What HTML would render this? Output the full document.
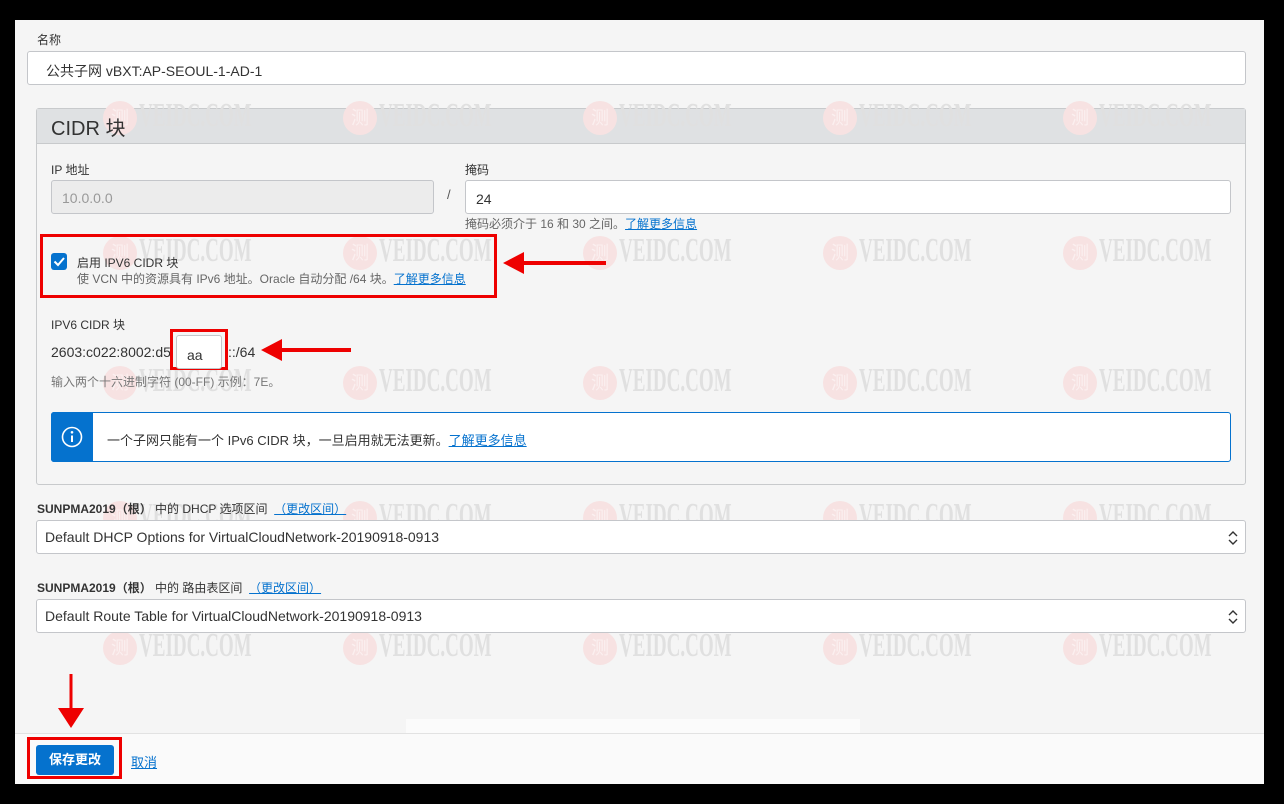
<!DOCTYPE html>
<html><head><meta charset="utf-8"><style>
*{box-sizing:border-box;margin:0;padding:0}
body{width:1284px;height:804px;background:#000;position:relative;overflow:hidden;font-family:"Liberation Sans","Noto Sans CJK SC",sans-serif;color:#333}
.a{position:absolute}
#pg{left:15px;top:20px;width:1249px;height:764px;background:#f5f5f5}
.lbl{font-size:12px;color:#333}
.inp{background:#fff;border:1px solid #c4c6ca;border-radius:3px}
.wm{position:absolute;width:140px;height:34px}
.wm .c{position:absolute;left:0;top:0;width:34px;height:34px;border-radius:50%;background:#f7e2e2;color:#fbf0f0;font-size:18px;text-align:center;line-height:34px}
.wm .t{position:absolute;left:36px;top:-4px;font-family:"Liberation Serif",serif;font-weight:bold;font-size:34px;color:#e0e0e0;transform:scaleX(.56);transform-origin:left}
.lk{color:#0572ce;text-decoration:underline}
.red{position:absolute;border:3px solid #e00}
.sel{font-size:14px;padding-left:8px;line-height:32px;color:#333}
</style></head><body>
<div id="pg" class="a"></div>
<div class="a" style="left:36px;top:108px;width:1210px;height:377px;border:1px solid #c8cacc;border-radius:3px;background:#f5f5f5"></div>
<div class="a" style="left:37px;top:109px;width:1208px;height:35px;background:#dfe1e3;border-bottom:1px solid #c8cacc"></div>
<div class="a" style="left:15px;top:733px;width:1249px;height:51px;background:#fafafa;border-top:1px solid #e2e2e2"></div>
<div class="a" style="left:406px;top:719px;width:454px;height:14px;background:#fbfbfb"></div>
<div id="wms"></div>
<div class="a lbl" style="left:37px;top:31px">名称</div>
<div class="a inp" style="left:27px;top:51px;width:1219px;height:34px;font-size:14px;padding:9px 0 0 18px;color:#333">公共子网 vBXT:AP-SEOUL-1-AD-1</div>

<div class="a" style="left:51px;top:112px;font-size:20px;color:#333">CIDR 块</div>

<div class="a lbl" style="left:51px;top:161px">IP 地址</div>
<div class="a" style="left:51px;top:180px;width:383px;height:34px;background:#ececec;border:1px solid #c4c6ca;border-radius:3px;font-size:14px;color:#999;padding:9px 0 0 10px">10.0.0.0</div>
<div class="a" style="left:447px;top:187px;font-size:13px;color:#555">/</div>
<div class="a lbl" style="left:465px;top:161px">掩码</div>
<div class="a inp" style="left:465px;top:180px;width:766px;height:34px;font-size:14px;padding:10px 0 0 10px">24</div>
<div class="a" style="left:465px;top:215px;font-size:12px;color:#666">掩码必须介于 16 和 30 之间。<span class="lk">了解更多信息</span></div>

<div class="red" style="left:40px;top:234px;width:457px;height:64px"></div>
<div class="a" style="left:51px;top:253px;width:16px;height:17px;background:#0572ce;border-radius:3px"></div>
<svg class="a" style="left:51px;top:253px" width="16" height="17"><path d="M3.5 8.5 L7 12 L13 5" stroke="#fff" stroke-width="2" fill="none"/></svg>
<div class="a" style="left:77px;top:254px;font-size:12px;color:#333">启用 IPV6 CIDR 块</div>
<div class="a" style="left:77px;top:270px;font-size:12px;color:#666">使 VCN 中的资源具有 IPv6 地址。Oracle 自动分配 /64 块。<span class="lk">了解更多信息</span></div>
<svg class="a" style="left:500px;top:250px" width="110" height="26"><path d="M106 13 H20" stroke="#e00" stroke-width="4"/><path d="M3 13 L24 2 L24 24 Z" fill="#e00"/></svg>

<div class="a lbl" style="left:51px;top:316px">IPV6 CIDR 块</div>
<div class="a" style="left:51px;top:344px;font-size:14px;color:#333">2603:c022:8002:d5</div>
<div class="red" style="left:170px;top:329px;width:58px;height:41px"></div>
<div class="a inp" style="left:176px;top:335px;width:46px;height:34px;font-size:14px;padding:11px 0 0 10px">aa</div>
<div class="a" style="left:228px;top:344px;font-size:14px;color:#333">::/64</div>
<svg class="a" style="left:258px;top:337px" width="96" height="26"><path d="M93 13 H20" stroke="#e00" stroke-width="4"/><path d="M3 13 L24 2 L24 24 Z" fill="#e00"/></svg>
<div class="a" style="left:51px;top:373px;font-size:12px;color:#777">输入两个十六进制字符 (00-FF) 示例：7E。</div>

<div class="a" style="left:51px;top:412px;width:1180px;height:50px;background:#fff;border:1px solid #0572ce;border-radius:3px"></div>
<div class="a" style="left:51px;top:412px;width:42px;height:50px;background:#0572ce;border-radius:3px 0 0 3px"></div>
<svg class="a" style="left:60px;top:425px" width="24" height="24"><circle cx="12" cy="12" r="9.5" stroke="#fff" stroke-width="1.6" fill="none"/><circle cx="12" cy="7.3" r="1.3" fill="#fff"/><path d="M12 10.5 V17" stroke="#fff" stroke-width="2"/></svg>
<div class="a" style="left:107px;top:430px;font-size:13px;color:#333">一个子网只能有一个 IPv6 CIDR 块，一旦启用就无法更新。<span class="lk">了解更多信息</span></div>

<div class="a" style="left:37px;top:500px;font-size:12px;color:#333"><b>SUNPMA2019（根）</b> 中的 DHCP 选项区间 &nbsp;<span class="lk">（更改区间）</span></div>
<div class="a inp sel" style="left:36px;top:520px;width:1210px;height:34px">Default DHCP Options for VirtualCloudNetwork-20190918-0913</div>
<svg class="a" style="left:1227px;top:530px" width="12" height="16"><path d="M2 6 L6 2 L10 6 M2 10 L6 14 L10 10" stroke="#333" stroke-width="1.4" fill="none"/></svg>
<div class="a" style="left:37px;top:579px;font-size:12px;color:#333"><b>SUNPMA2019（根）</b> 中的 路由表区间 &nbsp;<span class="lk">（更改区间）</span></div>
<div class="a inp sel" style="left:36px;top:599px;width:1210px;height:34px">Default Route Table for VirtualCloudNetwork-20190918-0913</div>
<svg class="a" style="left:1227px;top:609px" width="12" height="16"><path d="M2 6 L6 2 L10 6 M2 10 L6 14 L10 10" stroke="#333" stroke-width="1.4" fill="none"/></svg>

<svg class="a" style="left:54px;top:672px" width="34" height="58"><path d="M17 2 V38" stroke="#e00" stroke-width="3"/><path d="M4 36 L30 36 L17 56 Z" fill="#e00"/></svg>
<div class="red" style="left:27px;top:737px;width:95px;height:42px"></div>
<div class="a" style="left:36px;top:745px;width:78px;height:30px;background:#0572ce;border-radius:3px;color:#fff;font-size:13px;font-weight:bold;text-align:center;line-height:30px">保存更改</div>
<div class="a lk" style="left:131px;top:752px;font-size:13px">取消</div>
<script>
var h='';var ys=[101,236,366,501,631],xs=[103,343,583,823,1063];
ys.forEach(function(y){xs.forEach(function(x){h+='<div class="wm" style="left:'+x+'px;top:'+y+'px"><div class="c">测</div><div class="t">VEIDC.COM</div></div>';});});
document.getElementById('wms').innerHTML=h;
</script>
</body></html>
